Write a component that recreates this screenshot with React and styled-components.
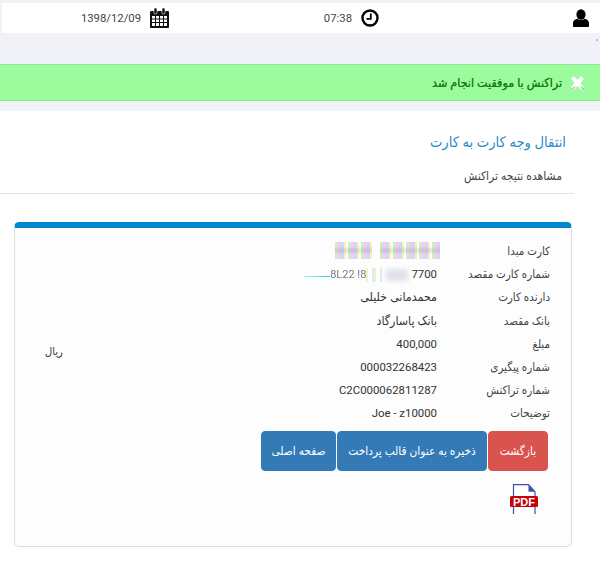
import React from 'react';
import styled, { createGlobalStyle } from 'styled-components';

const Global = createGlobalStyle`
  html, body { margin: 0; padding: 0; background: #f1f2f7; }
  body { font-family: Roboto, "DejaVu Sans Condensed", "DejaVu Sans", sans-serif; direction: rtl; color: #333; }
  * { box-sizing: border-box; }
`;

const Page = styled.div`
  width: 600px;
  height: 566px;
  overflow: hidden;
  padding-top: 3px;
`;

const TopBar = styled.div`
  height: 30px;
  margin-left: 2px;
  background: #fff;
  display: grid;
  grid-template-columns: repeat(3, 210px);
  padding-right: 11px;
  align-items: center;
`;

const TopItem = styled.div`
  display: flex;
  align-items: center;
  gap: 9px;
  font-size: 11.3px;
  color: #444;
`;

const Tick = styled.div`
  height: 31px;
  padding: 0 2px 0 0;
  font-size: 9px;
  line-height: 10px;
  color: #777;
`;

const Alert = styled.div`
  height: 37px;
  background: #9cfb9c;
  border-top: 1px solid #8fe98f;
  border-bottom: 1px solid #8fe98f;
  display: flex;
  align-items: center;
  gap: 8px;
  padding-right: 15px;
  font-size: 12.4px;
  text-shadow: 0 0 .5px #128012;
  color: #128012;
`;

const Panel = styled.div`
  margin-top: 10px;
  background: #fff;
  height: 460px;
  padding-top: 21px;
`;

const Title = styled.h3`
  margin: 0;
  padding-right: 34px;
  font-size: 14.6px;
  line-height: 20px;
  font-weight: 400;
  color: #2a8bcb;
`;

const SubTitle = styled.div`
  margin: 16px 26px 0 0;
  height: 26px;
  padding-right: 12px;
  font-size: 12px;
  line-height: 16px;
  color: #444;
  border-bottom: 1px solid #e2e2e2;
`;

const Card = styled.div`
  margin: 28px 28px 0 14px;
  height: 325px;
  border: 1px solid #ddd;
  border-top: 6px solid #0088cc;
  border-radius: 5px;
  background: #fdfdfd;
  padding: 12px 21px 0 0;
`;

const Row = styled.div`
  display: grid;
  grid-template-columns: 113px 1fr auto;
  height: 23.2px;
  font-size: 11.5px;
  line-height: 23px;
  color: #333;
`;

const Label = styled.div`
  color: #444;
`;

const Value = styled.div`
  font-size: 12.3px;
  white-space: nowrap;
`;

const Number = styled.div`
  font-size: 11.4px;
  white-space: nowrap;
`;

const Unit = styled.div`
  padding: 7px 0 0 30px;
  font-size: 11px;
`;

const Masked = styled.div`
  display: flex;
  gap: 8px;
  margin-right: -3px;
  padding-top: 2px;
`;

const Smear = styled.div`
  width: ${(p) => p.$width}px;
  height: ${(p) => p.$height}px;
  filter: blur(.7px);
  background:
    linear-gradient(0deg, transparent 25%, rgba(110, 110, 130, .2) 50%, transparent 75%),
    repeating-linear-gradient(90deg, #cfeec4 0 3px, #f4c8f8 3px 6px, #d0d8f4 6px 9px, #f8f2b8 9px 11px, #fff 11px 13px);
`;

const Target = styled.div`
  display: flex;
  align-items: center;
  font-size: 11.4px;
`;

const GrayBlob = styled.div`
  width: 22px;
  height: 12px;
  margin-right: 3px;
  background: #dfe2ea;
  filter: blur(2px);
`;

const PaleStripes = styled.div`
  width: 16px;
  height: 14px;
  margin-right: 4px;
  filter: blur(.6px);
  background: repeating-linear-gradient(90deg, #f4f0c0 0 2px, #fff 2px 6px, #d8ecf4 6px 8px);
`;

const Noise = styled.span`
  font-size: 11px;
  color: #6f7f88;
  filter: blur(.4px);
  white-space: nowrap;
`;

const TealLine = styled.div`
  width: 26px;
  height: 1px;
  margin-top: 3px;
  background: linear-gradient(90deg, #9ff4f4, #22d8e0);
`;

const Buttons = styled.div`
  display: flex;
  gap: 1px;
  margin: 5.4px 2px 0 0;
`;

const Button = styled.button`
  height: 40px;
  width: ${(p) => p.$width}px;
  border: 1px solid ${(p) => (p.$danger ? '#d9534f' : '#337ab7')};
  background: ${(p) => (p.$danger ? '#d9534f' : '#337ab7')};
  color: #fff;
  border-radius: 4px;
  font: 11.8px Roboto, "DejaVu Sans Condensed", "DejaVu Sans", sans-serif;
  padding: 0;
`;

const PdfLink = styled.div`
  margin: 13px 12px 0 0;
  width: 28px;
  height: 30px;
`;

const UserIcon = () => (
  <svg width="16" height="18" viewBox="0 0 16 18">
    <ellipse cx="8" cy="5.5" rx="4.6" ry="5.2" fill="#000" />
    <path d="M0 17v-3c0-2 2-4 4.500-4.200C5.500 11.500 10.500 11.500 11.500 9.800 14 10 16 12 16 14v3c0 .6-.4 1-1 1H1c-.6 0-1-.4-1-1z" fill="#000" />
  </svg>
);

const ClockIcon = () => (
  <svg width="18" height="18" viewBox="0 0 18 18">
    <circle cx="9" cy="9" r="7.5" fill="#fff" stroke="#000" strokeWidth="2.4" />
    <path d="M9.800 4.500v5.300H5.500" fill="none" stroke="#000" strokeWidth="1.800" />
  </svg>
);

const CalendarIcon = () => (
  <svg width="19" height="20" viewBox="0 0 19 20">
    <path d="M1 3h17a1 1 0 0 1 1 1v15a1 1 0 0 1-1 1H1a1 1 0 0 1-1-1V4a1 1 0 0 1 1-1z" fill="#111" />
    <rect x="4" y="0" width="3" height="6" rx="1.200" fill="#111" stroke="#fff" strokeWidth=".6" />
    <rect x="12" y="0" width="3" height="6" rx="1.200" fill="#111" stroke="#fff" strokeWidth=".6" />
    <path d="M2 8h15v10H2z" fill="#fff" />
    <path d="M2 11h15M2 14.500h15M5.500 8v10M9.500 8v10M13.500 8v10" stroke="#111" strokeWidth="1" />
  </svg>
);

const CrossIcon = () => (
  <svg width="15" height="16" viewBox="0 0 15 16">
    <path d="M1 4l3-3 3.500 4L11 1l3 3-3.500 4 3.500 4-3 3-3.500-4L4 15l-3-3 3.500-4z" fill="#fff" stroke="#d8e8d8" strokeWidth=".6" />
    <path d="M2.500 14L5 11.500M13 14l-2-2.500" stroke="#7d8f7d" strokeWidth="1" />
  </svg>
);

const PdfIcon = () => (
  <svg width="28" height="30" viewBox="0 0 28 30">
    <path d="M3.500 30V.7h15l6.500 7V30" fill="#fff" stroke="#3a55a0" strokeWidth="1.200" />
    <path d="M18.500 .7v7h6.500z" fill="#3a55a0" />
    <rect x="0" y="12" width="28" height="11" rx="1.500" fill="#c8000a" />
    <text x="14" y="21.600" textAnchor="middle" fontFamily="Liberation Sans, sans-serif" fontWeight="700" fontSize="11" fill="#fff">PDF</text>
  </svg>
);

const details = [
  ['شماره پیگیری', '000032268423'],
  ['شماره تراکنش', 'C2C000062811287'],
  ['توضیحات', 'Joe - z10000'],
];

export default function App() {
  return (
    <Page>
      <Global />
      <TopBar>
        <TopItem><UserIcon /></TopItem>
        <TopItem><ClockIcon /><span>07:38</span></TopItem>
        <TopItem><CalendarIcon /><span>1398/12/09</span></TopItem>
      </TopBar>
      <Tick>،</Tick>
      <Alert><CrossIcon /><span>تراکنش با موفقیت انجام شد</span></Alert>
      <Panel>
        <Title>انتقال وجه کارت به کارت</Title>
        <SubTitle>مشاهده نتیجه تراکنش</SubTitle>
        <Card>
          <Row>
            <Label>کارت مبدا</Label>
            <Masked>
              <Smear $width={60} $height={17} />
              <Smear $width={37} $height={17} />
            </Masked>
          </Row>
          <Row>
            <Label>شماره کارت مقصد</Label>
            <Target>
              <span dir="ltr">7700</span>
              <GrayBlob />
              <PaleStripes />
              <Noise dir="ltr">8L22 !8</Noise>
              <TealLine />
            </Target>
          </Row>
          <Row>
            <Label>دارنده کارت</Label>
            <Value>محمدمانی خلیلی</Value>
          </Row>
          <Row>
            <Label>بانک مقصد</Label>
            <Value>بانک پاسارگاد</Value>
          </Row>
          <Row>
            <Label>مبلغ</Label>
            <Number>400,000</Number>
            <Unit>ریال</Unit>
          </Row>
          {details.map(([label, value]) => (
            <Row key={label}>
              <Label>{label}</Label>
              <Number>{value}</Number>
            </Row>
          ))}
          <Buttons>
            <Button $danger $width={60}>بازگشت</Button>
            <Button $width={150}>ذخیره به عنوان قالب پرداخت</Button>
            <Button $width={75}>صفحه اصلی</Button>
          </Buttons>
          <PdfLink><PdfIcon /></PdfLink>
        </Card>
      </Panel>
    </Page>
  );
}
